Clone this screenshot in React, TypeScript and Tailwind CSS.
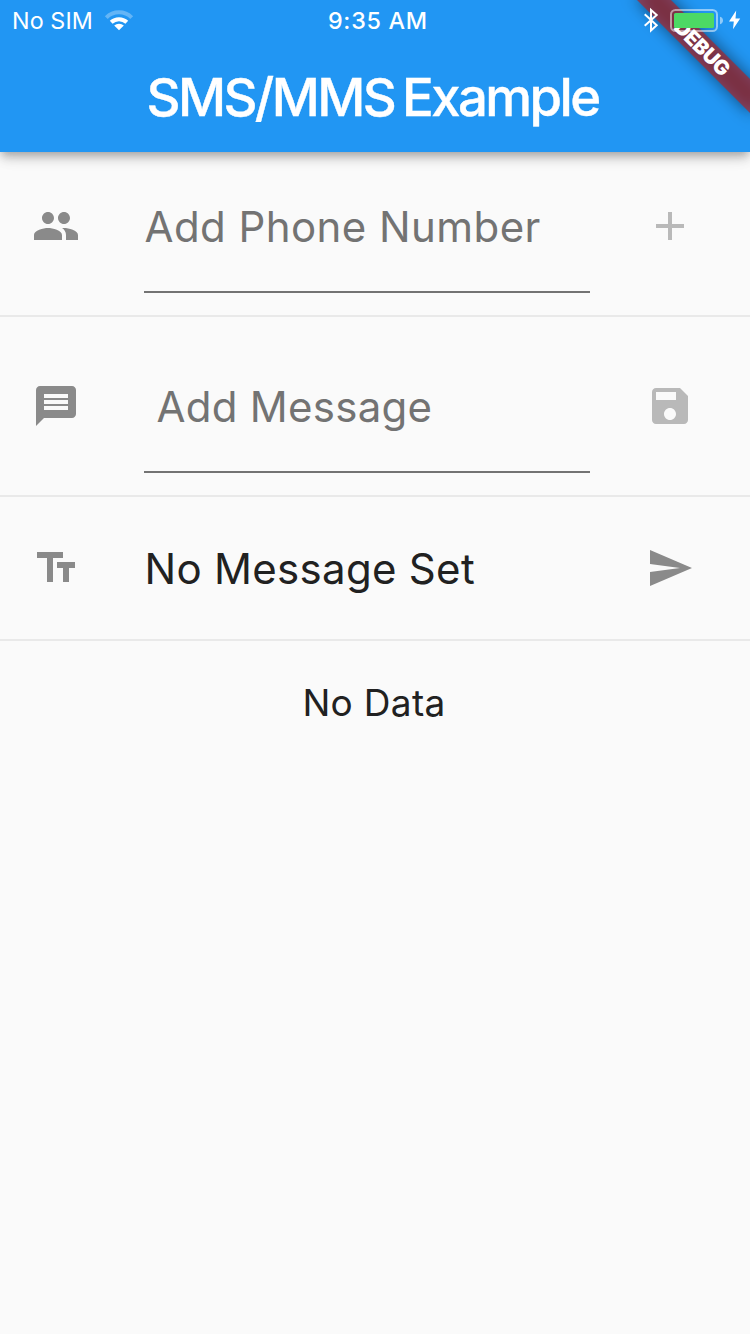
import type { ReactNode } from "react";

function Icon({ d, className }: { d: string; className: string }) {
  return (
    <svg viewBox="0 0 24 24" className={`size-12 shrink-0 ${className}`} fill="currentColor">
      <path d={d} />
    </svg>
  );
}

const paths = {
  people:
    "M16 11c1.66 0 2.99-1.34 2.99-3S17.66 5 16 5c-1.66 0-3 1.34-3 3s1.34 3 3 3zm-8 0c1.66 0 2.99-1.34 2.99-3S9.66 5 8 5C6.34 5 5 6.34 5 8s1.34 3 3 3zm0 2c-2.33 0-7 1.17-7 3.5V19h14v-2.5c0-2.33-4.67-3.5-7-3.5zm8 0c-.29 0-.62.02-.97.05 1.16.84 1.97 1.97 1.97 3.45V19h6v-2.5c0-2.33-4.67-3.5-7-3.5z",
  message:
    "M20 2H4c-1.1 0-1.99.9-1.99 2L2 22l4-4h14c1.1 0 2-.9 2-2V4c0-1.1-.9-2-2-2zm-2 12H6v-2h12v2zm0-3H6V9h12v2zm0-3H6V6h12v2z",
  textFields: "M2.5 4v3h5v12h3V7h5V4h-13zm19 5h-9v3h3v7h3v-7h3V9z",
  add: "M19 13h-6v6h-2v-6H5v-2h6V5h2v6h6v2z",
  save: "M17 3H5c-1.11 0-2 .9-2 2v14c0 1.1.89 2 2 2h14c1.1 0 2-.9 2-2V7l-4-4zm-5 16c-1.66 0-3-1.34-3-3s1.34-3 3-3 3 1.34 3 3-1.34 3-3 3zm3-10H5V5h10v4z",
  send: "M2.01 21L23 12 2.01 3 2 10l15 2-15 2z",
};

function StatusBar() {
  return (
    <div className="relative z-20 flex h-10 items-center text-[23.3px] leading-10">
      <div className="flex w-[328px] items-center gap-[11px] pl-3">
        <span className="pt-0.5 tracking-[0.1px]">No SIM</span>
        <svg viewBox="0 0 30 22" className="h-[22px] w-[30px]" fill="none" stroke="white" strokeWidth="4">
          <path d="M2.3 8.6a18 18 0 0 1 25.4 0" opacity="0.3" />
          <path d="M7.2 13.3a11.2 11.2 0 0 1 15.6 0" />
          <path d="M10.2 16.6a7 7 0 0 1 9.6 0L15 21.3z" fill="white" stroke="none" />
        </svg>
      </div>
      <span className="pt-0.5 font-medium tracking-[0.7px]">9:35 AM</span>
      <div className="flex flex-1 justify-end">
        <svg viewBox="640 0 110 40" className="h-10 w-[110px]">
          <path
            d="M644.7 14.3 656.7 25.3l-5.7 5.2V10l5.700 5-12 10.800"
            fill="none"
            stroke="white"
            strokeWidth="2"
          />
          <rect x="671" y="10" width="46" height="21" rx="4.5" fill="none" stroke="white" strokeWidth="2" opacity="0.5" />
          <rect x="674" y="13" width="40" height="15" rx="1.5" fill="#4cd964" />
          <path d="M720 16.8c2 .4 3 1.9 3 3.7s-1 3.3-3 3.7z" fill="white" opacity="0.5" />
          <path d="M736.2 10.5 729 21.5h4.8l-.8 7.8 7.2-10.9h-4.7z" fill="white" />
        </svg>
      </div>
    </div>
  );
}

function DebugBanner() {
  return (
    <div className="absolute top-0 right-0 z-10 size-[152px] overflow-hidden">
      <div className="absolute top-9 left-6 h-6 w-40 rotate-45">
        <div className="absolute inset-0 bg-black/50 blur-[8px]" />
        <div className="relative flex h-6 items-center justify-center bg-[#b71c1c]/63 text-[20.4px] leading-6 font-black tracking-[-0.4px]">
          DEBUG
        </div>
      </div>
    </div>
  );
}

function Row({ icon, action, height, children }: { icon: ReactNode; action: ReactNode; height: string; children: ReactNode }) {
  return (
    <li className={`flex border-b-2 border-[#e9e9e9] pr-14 pl-8 ${height}`}>
      {icon}
      <div className="mr-14 ml-16 flex-1 text-[42px] leading-12">{children}</div>
      {action}
    </li>
  );
}

export default function App() {
  return (
    <div className="min-h-screen overflow-hidden bg-[#fafafa] font-['Inter','Liberation_Sans',sans-serif] text-[#212121]">
      <header className="relative z-10 h-[152px] bg-[#2196f3] text-white shadow-[0_4px_8px_-2px_#00000033,0_8px_10px_-1px_#00000024,0_2px_20px_-2px_#0000001f]">
        <StatusBar />
        <DebugBanner />
        <h1 className="pt-[26px] pl-[146.5px] text-[52.7px] leading-[62px] font-medium tracking-[-2.6px] whitespace-nowrap [word-spacing:-3.5px] [-webkit-text-stroke:0.4px_white]">
          SMS/MMS Example
        </h1>
      </header>
      <ul>
        <Row
          height="h-[165px] pt-[50px]"
          icon={<Icon d={paths.people} className="text-[#8a8a8a]" />}
          action={<Icon d={paths.add} className="text-[#b9b9b9]" />}
        >
          <p className="h-[91px] border-b-2 border-[#737373] pt-px pl-[0.5px] tracking-[0.43px] text-[#737373]">
            Add Phone Number
          </p>
        </Row>
        <Row
          height="h-[180px] pt-[65px]"
          icon={<Icon d={paths.message} className="text-[#8a8a8a]" />}
          action={<Icon d={paths.save} className="text-[#b9b9b9]" />}
        >
          <p className="h-[91px] border-b-2 border-[#737373] pt-px pl-[12.5px] tracking-[0.27px] text-[#737373]">
            Add Message
          </p>
        </Row>
        <Row
          height="h-[144px] pt-[47px]"
          icon={<Icon d={paths.textFields} className="text-[#8a8a8a]" />}
          action={<Icon d={paths.send} className="text-[#8a8a8a]" />}
        >
          <p className="pt-px pl-[0.5px] tracking-[0.3px]">No Message Set</p>
        </Row>
      </ul>
      <p className="pt-10 pr-0.5 text-center text-[37px] leading-[44px] tracking-[0.3px]">No Data</p>
    </div>
  );
}
